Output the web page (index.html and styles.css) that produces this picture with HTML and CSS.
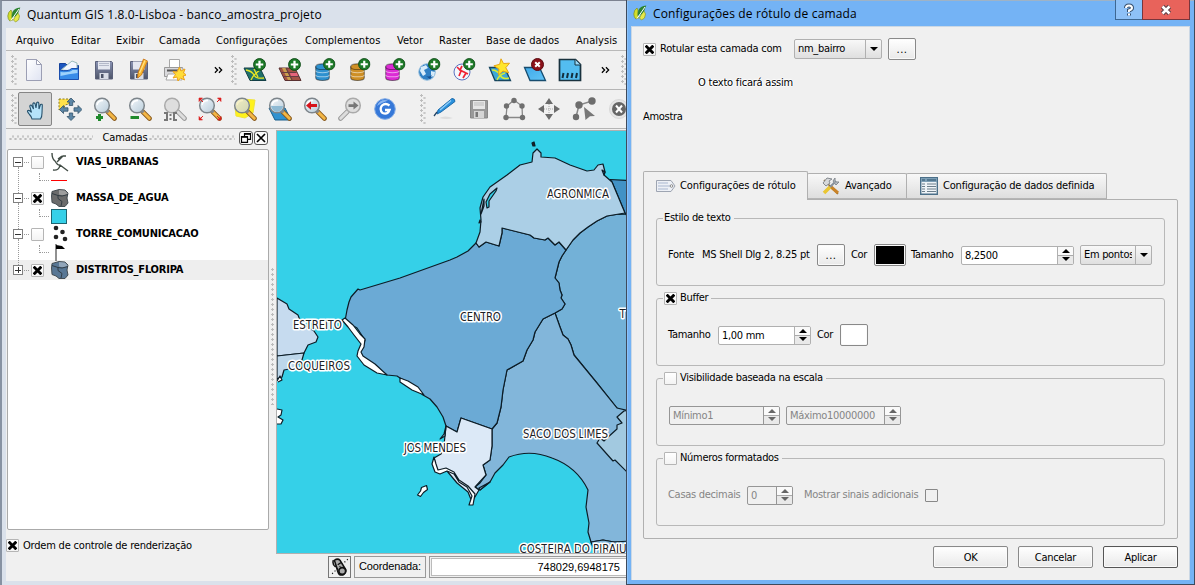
FILE: index.html
```html
<!DOCTYPE html>
<html lang="pt-BR">
<head>
<meta charset="utf-8">
<title>Quantum GIS</title>
<link rel="stylesheet" href="styles.css">
</head>
<body>
<svg class="defs" width="0" height="0">
  <defs>
    <linearGradient id="gBlue" x1="0" y1="0" x2="1" y2="1"><stop offset="0" stop-color="#3fa9e8"/><stop offset="1" stop-color="#62c4f6"/></linearGradient>
    <linearGradient id="gLens" x1="0" y1="0" x2="1" y2="1"><stop offset="0" stop-color="#f4f8fb"/><stop offset="1" stop-color="#b9cddb"/></linearGradient>
    <linearGradient id="gDisk" x1="0" y1="0" x2="0" y2="1"><stop offset="0" stop-color="#8a93b4"/><stop offset="1" stop-color="#4d5468"/></linearGradient>
    <linearGradient id="gPaper" x1="0" y1="0" x2="1" y2="1"><stop offset="0" stop-color="#fff"/><stop offset="1" stop-color="#dfe3f2"/></linearGradient>
    <symbol id="qgis" viewBox="0 0 14 16"><path d="M4 3Q1 5 .8 9q0 3 2 5l3-1Q4 9 5 5z" fill="#d3df2a" stroke="#7c8c22" stroke-width=".7"/><path d="M10.500 5l2 4-1 4-3 2-2-2z" fill="#e8e94a" stroke="#8c9926" stroke-width=".7"/><path d="M13.300.5Q7 .8 5.300 5.500L4.600 11Q10 9.500 11.500 5z" fill="#2e8432"/><path d="M12 2L4 13.500" stroke="#fff" stroke-width="1"/></symbol>
    <symbol id="plus" viewBox="0 0 14 14"><circle cx="7" cy="7" r="6.400" fill="#1d7a28" stroke="#0d4b16"/><path d="M7 3v8M3 7h8" stroke="#fff" stroke-width="2.400"/></symbol>
    <symbol id="lens" viewBox="0 0 24 24"><path d="M14.500 14.500l7 7" stroke="#8a5a1c" stroke-width="4.600" stroke-linecap="round"/><path d="M14.800 14.800l6.500 6.500" stroke="#f3b645" stroke-width="3" stroke-linecap="round"/><path d="M13.500 13.500l2 2" stroke="#888" stroke-width="3"/><circle cx="9" cy="8.500" r="7.300" fill="url(#gLens)" stroke="#7d858b" stroke-width="1.500"/><path d="M4 8Q5 3.500 10 3.500" stroke="#fff" stroke-width="1.300" fill="none"/></symbol>
    <symbol id="glens" viewBox="0 0 24 24"><path d="M14.500 14.500l7 7" stroke="#999" stroke-width="4.600" stroke-linecap="round"/><path d="M14.800 14.800l6.500 6.500" stroke="#ddd" stroke-width="3" stroke-linecap="round"/><circle cx="9" cy="8.500" r="7.300" fill="#dedede" stroke="#aaa" stroke-width="1.500"/></symbol>
    <symbol id="poly" viewBox="0 0 20 20"><path d="M2 3.500L9 1.500l6 .5 3 3-1 5 1 5-3 3.500H9L6 16l-4-1.500L1.500 8z" fill="currentColor" stroke="#3a4348" stroke-width=".9"/><path d="M9 2l6 .5 3 3.500-5 1.500-4-1z" fill="#fff" opacity=".35"/><path d="M2 5.500l6 2 4 .5 6-1.500M8 7.500l0 3 4 3-1 4.500" fill="none" stroke="#2b363d" stroke-width=".9"/></symbol>
    <symbol id="dbs" viewBox="0 0 14 17"><path d="M.6 3.500v10.500q0 2.500 6.400 2.500t6.400-2.500V3.500z" fill="currentColor" stroke="#0007"/><ellipse cx="7" cy="3.500" rx="6.400" ry="2.700" fill="currentColor" stroke="#0006"/><path d="M.6 7.200q0 2 6.400 2t6.400-2M.6 11q0 2 6.400 2t6.400-2" fill="none" stroke="#fff8"/></symbol>
    <symbol id="cross" viewBox="0 0 9 9"><path d="M1.700 1.700l5.600 5.600M7.300 1.700L1.700 7.300" stroke="#000" stroke-width="2.900" stroke-linecap="square"/></symbol>
    <symbol id="chevrons" viewBox="0 0 10 8"><path d="M1 1l3 3-3 3M5.500 1l3 3-3 3" fill="none" stroke="#000" stroke-width="1.400"/></symbol>
  </defs>
</svg>

<div class="desktop">
<section class="main-window">
  <header class="main-title"><svg class="logo"><use href="#qgis"/></svg><span>Quantum GIS 1.8.0-Lisboa - banco_amostra_projeto</span></header>
  <div class="client">
    <nav class="menu"><span>Arquivo</span><span>Editar</span><span>Exibir</span><span>Camada</span><span>Configurações</span><span>Complementos</span><span>Vetor</span><span>Raster</span><span>Base de dados</span><span>Analysis</span></nav>

    <div class="toolbar files">
      <i class="grip"></i>
      <div class="tool"><svg viewBox="0 0 24 24"><path d="M4.500 1.500h10l5 5v16h-15z" fill="url(#gPaper)" stroke="#9c9fb4"/><path d="M14.500 1.500v5h5z" fill="#fff" stroke="#9c9fb4"/></svg></div>
      <div class="tool"><svg viewBox="0 0 24 24"><path d="M2.500 8V5.500h6l2 2h11V21h-19z" fill="#1c57c0" stroke="#15429a"/><path d="M4 12L15 3l5 2v8z" fill="#f3f7ff" stroke="#9bb"/><path d="M2.500 12q9 2 12-1.500h7V21.500h-19z" fill="#388be8" stroke="#1b4fae"/><path d="M3.500 14q9 1 12-2h5v3q-9 1-17 3z" fill="#9fd2fb"/></svg></div>
      <div class="tool"><svg viewBox="0 0 24 24"><path d="M3.500 3.500h16l1 1v16.500h-17z" fill="url(#gDisk)" stroke="#5b617a"/><path d="M6 3.500h12v8H6z" fill="#e4e7f0"/><path d="M7 5.500h10M7 7.500h10" stroke="#b4b9c9"/><path d="M7.500 15h9v6h-9z" fill="#d9dde6"/><path d="M9 16h2.500v4H9z" fill="#4d5468"/></svg></div>
      <div class="tool"><svg viewBox="0 0 24 24"><path d="M3.500 3.500h16l1 1v16.500h-17z" fill="url(#gDisk)" stroke="#5b617a"/><path d="M6 3.500h12v8H6z" fill="#e4e7f0"/><path d="M7.500 15h9v6h-9z" fill="#d9dde6"/><path d="M9 16h2.500v4H9z" fill="#4d5468"/><path d="M16.500 1l4 2-6 14-4 3 .5-5z" fill="#f8b52d" stroke="#c46e14" stroke-width=".8"/><path d="M18 2.500l-5.500 12.500" stroke="#ffe38a" stroke-width="1.200"/></svg></div>
      <div class="tool"><svg viewBox="0 0 24 24"><path d="M7.500 1.500h10v9h-10z" fill="#fff" stroke="#a7a7a7"/><path d="M2.500 9.500h18l1 3v6h-19z" fill="#d9d9dc" stroke="#999"/><path d="M5 12.500h14" stroke="#555" stroke-width="2"/><path d="M6 16h12l2 6H4z" fill="#fff" stroke="#aaa"/><path d="M17.500 9l1.500 4 4-2-1.500 4 3 2-3.500 1 1.500 4-4-2-2.500 3-1-4-4 1 2.500-3.500-2.500-3 4 .5z" fill="#ffdc38" stroke="#eda21b"/></svg></div>
      <span class="more"><svg><use href="#chevrons"/></svg></span>
      <i class="grip"></i>
      <div class="tool"><svg viewBox="0 0 24 24"><path d="M1 10h16l6 12.500H7z" fill="#20716a" stroke="#123f46"/><path d="M3 12q6 1 8 5t10 3M8 22q2-5 9-10M11 11l4 8" fill="none" stroke="#e9e622" stroke-width="1.300"/><use href="#plus" x="10" y="0" width="13" height="13"/></svg></div>
      <div class="tool"><svg viewBox="0 0 24 24"><path d="M1 10h16l6 12.500H7z" fill="#a45345" stroke="#5a3030"/><path d="M4 10h4l6 12H10z" fill="#c9a04f"/><path d="M3 14.500h15M5 18.500h16M8 10l6 12" stroke="#683d43" stroke-width="1.200"/><path d="M12 15l7 0 1 3-7 0z" fill="#e5657b"/><use href="#plus" x="10" y="0" width="13" height="13"/></svg></div>
      <div class="tool db-blue"><svg viewBox="0 0 24 24"><use href="#dbs" x="2" y="5" width="15" height="18"/><use href="#plus" x="10" y="0" width="12.500" height="12.500"/></svg></div>
      <div class="tool db-gold"><svg viewBox="0 0 24 24"><use href="#dbs" x="2" y="5" width="15" height="18"/><use href="#plus" x="10" y="0" width="12.500" height="12.500"/></svg></div>
      <div class="tool db-pink"><svg viewBox="0 0 24 24"><use href="#dbs" x="2" y="5" width="15" height="18"/><use href="#plus" x="10" y="0" width="12.500" height="12.500"/></svg></div>
      <div class="tool"><svg viewBox="0 0 24 24"><circle cx="9" cy="14" r="8.300" fill="#2f7fc4" stroke="#9dc3df"/><path d="M3 9l5-2 2 3-4 2 2 4-3 2-3-5zM13 13l4 1-1 4-3 1z" fill="#d8ecfa"/><path d="M8 18q5 2 7-3l-3 6z" fill="#154f91"/><use href="#plus" x="10" y="0" width="12.500" height="12.500"/></svg></div>
      <div class="tool"><svg viewBox="0 0 24 24"><circle cx="9" cy="14" r="8" fill="#f5f7fc" stroke="#5a72c0"/><path d="M4 9l4 4-2 5M9 8l-2 4 6 3-3 5M11 14l4 2" fill="none" stroke="#ef2335" stroke-width="1.700"/><use href="#plus" x="10" y="0" width="12.500" height="12.500"/></svg></div>
      <div class="tool"><svg viewBox="0 0 24 24"><path d="M1.500 9.500h15l6 13H7z" fill="#3fa9d6" stroke="#16455f" stroke-width="1.300"/><path d="M4 12q5 0 8 5t9 3M9 22q2-5 8-7" fill="none" stroke="#d8ec32" stroke-width="1.500"/><path d="M13 .8l2.500 4.700 6-.3-3.700 4.500 3 5.300-5.800-2-4.500 4 .4-6-5-3.200 5.800-1.500z" fill="#ffe62a" stroke="#e6a515"/></svg></div>
      <div class="tool"><svg viewBox="0 0 24 24"><path d="M1.500 9.500h15l6 13H7z" fill="url(#gBlue)" stroke="#174c6e" stroke-width="1.300"/><circle cx="14.500" cy="6.500" r="6" fill="#8b1119" stroke="#5a0a10"/><path d="M12.200 4.200l4.600 4.600m0-4.600l-4.600 4.600" stroke="#fff" stroke-width="2"/></svg></div>
      <div class="tool"><svg viewBox="0 0 24 24"><path d="M1.500 1.500h16l5 5v16h-21z" fill="#53bdf0" stroke="#19323e" stroke-width="1.700"/><path d="M17 1.500v5.500h5.500" fill="#9bdcfb" stroke="#19323e"/><path d="M5.500 15l-1 5M10 15l-1 5M14.500 15l-1 5M19 15l-1 5" stroke="#142f3d" stroke-width="2"/></svg></div>
      <span class="more last"><svg><use href="#chevrons"/></svg></span>
      <i class="grip"></i>
    </div>

    <div class="toolbar navigation">
      <i class="grip"></i>
      <div class="tool pressed"><svg viewBox="0 0 24 24"><path d="M9 22q-.5-2.500-2.500-4.500Q3.500 14 5 13.500q1.500-.5 3.500 2L6.800 9.500q0-1.800 1.700-1.300L10.500 12l-.7-5Q10.500 5 12 6.500L13 11l.8-5.500q1.700-1 2 .8L16 12l1.500-4.500q1.800-.8 1.800 1L19 16q0 4-1.500 6z" fill="#b5e2f9" stroke="#26516c" stroke-width="1.100"/></svg></div>
      <div class="tool"><svg viewBox="0 0 24 24"><path d="M1 2h11l-1 5-4 1-1 3-5 2z" fill="#ffe14a" stroke="#8b7a1f" stroke-dasharray="2 1.500"/><path d="M13 1l4 4h-2.300v3.500h-3.400V5H9zM13 23.500l-4-4h2.300V16h3.400v3.500H17zM1.500 12.500l4-4v2.300H10v3.400H5.500v2.300zM24 12.500l-4-4v2.300h-4v3.400h4v2.300z" fill="#5c86a6" stroke="#35546b" stroke-width=".8"/></svg></div>
      <div class="tool"><svg viewBox="0 0 24 24"><use href="#lens"/><path d="M6.500 17v7M3 20.500h7" stroke="#1f8a2c" stroke-width="3"/></svg></div>
      <div class="tool"><svg viewBox="0 0 24 24"><use href="#lens"/><path d="M2.500 20.500h8.500" stroke="#1f8a2c" stroke-width="3"/></svg></div>
      <div class="tool"><svg viewBox="0 0 24 24"><use href="#glens"/><path d="M1 16h3v7H1M7.500 17v2m0 2v2M14 16h-3v7h3" fill="none" stroke="#777" stroke-width="2"/></svg></div>
      <div class="tool"><svg viewBox="0 0 24 24"><use href="#lens"/><path d="M1 1h3.500L1 4.500zM23 1h-3.500l3.500 3.500zM1 23h3.500l-3.500-3.500zM23 23h-3.500l3.500-3.500z" fill="#dc2020" stroke="#dc2020" stroke-width=".6"/><path d="M2 2l3 3m17-3l-3 3M2 22l3-3m17 3l-3-3" stroke="#dc2020"/></svg></div>
      <div class="tool"><svg viewBox="0 0 24 24"><path d="M9 2l13 1-2 13-8 5-9-2-1-9z" fill="#fff21c" stroke="#f0e43b"/><use href="#lens"/><circle cx="9" cy="8.500" r="6.400" fill="#eddf80" opacity=".45"/></svg></div>
      <div class="tool"><svg viewBox="0 0 24 24"><path d="M1 11h16l6 12H7z" fill="#3192d0" stroke="#195c89"/><use href="#lens"/><path d="M3 9h12q-1 5-6 6-5-1-6-6z" fill="#8ebad4"/></svg></div>
      <div class="tool"><svg viewBox="0 0 24 24"><use href="#lens"/><path d="M3 8.500l5-4.200v2.700h6v3H8v2.700z" fill="#d7141c"/></svg></div>
      <div class="tool"><svg viewBox="0 0 24 24"><g transform="matrix(-1 0 0 1 24 0)"><use href="#glens"/></g><path d="M20.500 8.500l-5-4v2.700h-5v2.700h5v2.700z" fill="#777"/></svg></div>
      <div class="tool"><svg viewBox="0 0 24 24"><circle cx="12" cy="12" r="10.300" fill="#3678d8" stroke="#7fa9e5"/><path d="M4 9Q7 1.500 15 3.500 10 5 4 9z" fill="#8ab5f1"/><path d="M16.500 8.500q-4-3-7.500 0-3 4 .5 7.500 5 2 7-3H12" fill="none" stroke="#fff" stroke-width="2.300"/></svg></div>
      <i class="grip far"></i>
      <div class="tool"><svg viewBox="0 0 24 24"><path d="M7 21q6-3 14 0-6 2-14 0" fill="#ddd"/><path d="M20 1.500q3 0 3 3L9 15l-4 2 1-4z" fill="#2a91dc" stroke="#1c6aab"/><path d="M19 3.500L8 13" stroke="#91cef9" stroke-width="1.300"/><path d="M5 15l-3 4" stroke="#246" stroke-width="1.300"/></svg></div>
      <div class="tool"><svg viewBox="0 0 24 24"><path d="M3.500 3.500h17v17.500h-17z" fill="#999" stroke="#888"/><path d="M6 4h12v8H6z" fill="#e6e6e6"/><path d="M7 6h10M7 8h10" stroke="#bbb"/><path d="M7 14h10v7H7z" fill="#d5d5d5"/><path d="M8.500 15H11v5H8.500z" fill="#777"/></svg></div>
      <div class="tool"><svg viewBox="0 0 24 24"><path d="M4 20.500L5 9l7-6 8 6 .5 11.500z" fill="none" stroke="#888" stroke-width="1.300"/><g fill="#6f6f6f"><circle cx="12" cy="3.500" r="2.700"/><circle cx="4.500" cy="9" r="2.700"/><circle cx="20" cy="9" r="2.700"/><circle cx="4" cy="20.500" r="2.700"/><circle cx="20.500" cy="20.500" r="2.700"/></g></svg></div>
      <div class="tool"><svg viewBox="0 0 24 24"><path d="M12 1l4 6H8zM12 23l4-6H8zM1 12l6-4v8zM23 12l-6-4v8z" fill="#6b6b6b"/><path d="M12 7v10M7 12h10" stroke="#aaa" stroke-dasharray="1 1"/></svg></div>
      <div class="tool"><svg viewBox="0 0 24 24"><path d="M4 20L7 8l13-4" fill="none" stroke="#888" stroke-width="1.500"/><g fill="#6d6d6d"><circle cx="20" cy="4" r="3.700"/><circle cx="7" cy="8" r="3.700"/><circle cx="4" cy="20" r="3.200"/></g><path d="M12 10l11 9-5 .3L13.500 23z" fill="#777"/></svg></div>
      <div class="tool"><svg viewBox="0 0 24 24"><circle cx="12" cy="12" r="9.500" fill="#e5e5e5" stroke="#d8d8d8"/><circle cx="12" cy="12" r="7" fill="#666"/><path d="M9 8.500l6 7m0-7l-6 7" stroke="#fff" stroke-width="2"/></svg></div>
    </div>

    <div class="workspace">
      <aside class="dock">
        <div class="dock-head"><i class="dots"></i><span>Camadas</span><i class="dots right"></i>
          <b class="mini"><svg viewBox="0 0 12 12"><path d="M4.500 4V1.700h6v5.600H8M1.500 4.700h6v5.600h-6z" fill="none" stroke="#000" stroke-width="1.200"/><path d="M4 2h7M1 5h7" stroke="#000" stroke-width="1.600"/></svg></b>
          <b class="mini"><svg viewBox="0 0 12 12"><path d="M2 2l8 8m0-8l-8 8" stroke="#000" stroke-width="1.700"/></svg></b></div>
        <div class="tree">
          <div class="layer"><i class="expander"></i><i class="check"></i><svg viewBox="0 0 20 20"><path d="M2 1q0 6 3 8 3 5 5 4l8 6M7 10l6-6h3M12 4L8 7M3 18q6 1 7-5" fill="none" stroke="#414c45" stroke-width="1.400"/></svg><span>VIAS_URBANAS</span></div>
          <div class="symbol"><i class="branch"></i><i class="line"></i></div>
          <div class="layer"><i class="expander"></i><i class="check"><svg><use href="#cross"/></svg></i><svg class="gray" viewBox="0 0 20 20"><use href="#poly"/></svg><span>MASSA_DE_AGUA</span></div>
          <div class="symbol"><i class="branch"></i><i class="water"></i></div>
          <div class="layer"><i class="expander"></i><i class="check"></i><svg viewBox="0 0 20 20"><g fill="#222"><circle cx="6" cy="4" r="2.300"/><circle cx="12.500" cy="8" r="2.300"/><circle cx="6" cy="13" r="2.300"/><circle cx="15" cy="15" r="2.300"/></g></svg><span>TORRE_COMUNICACAO</span></div>
          <div class="symbol"><i class="branch"></i><svg viewBox="0 0 17 17"><path d="M5 0v17" stroke="#222"/><path d="M5 1l6 1 3 3H5z" fill="#000"/></svg></div>
          <div class="layer selected"><i class="expander plus"></i><i class="check"><svg><use href="#cross"/></svg></i><svg class="slate" viewBox="0 0 20 20"><use href="#poly"/></svg><span>DISTRITOS_FLORIPA</span></div>
        </div>
        <div class="render-order"><i class="check"><svg><use href="#cross"/></svg></i><span>Ordem de controle de renderização</span></div>
      </aside>
      <div class="splitter"><i></i></div>
      <div class="map-side">
        <svg class="map" viewBox="277 131 349 422">
          <rect x="277" y="131" width="349" height="422" fill="#35d0e8"/>
          <g stroke="#0c1c26" stroke-width="1.200" stroke-linejoin="round">
            <path d="M566 250L573 240 580 233 588 227 597 221 607 216 616 214.500 630 214V415L617 408 597 383 574 355 571 345 568 339 563 335 560 327 555 313 562 309 565 304 561 298 562 295 560 290 559 283 555 278 559 262 562 256z" fill="#73b1d7"/>
            <path d="M610 179.500L630 180.500V220L625 213 612 182z" fill="#4292c6"/>
            <path d="M555 313L560 327 563 335 568 339 571 345 574 355 597 383 617 408 630 411 630 542 614 542 603 540 591 542 588 532 589 523 586 507 588 490Q577 467 552 458 530 449 509 457L503 465 495 473 490 482 480 490 475 487 480 483 486 475 483 465 490 460 492 446 492 429 497 423 501 407 503 390 507 370 523 361 527 350 533 340 535 332 543 319z" fill="#82b6da"/>
            <path d="M591 542L603 540 614 542 630 541V560H598z" fill="#82b6da"/>
            <path d="M630 410L624 411 617 417 622 423 617 425 617 429 607 438 604 441 600 438 597 443 613 461 615 460 630 475z" fill="#a2c9e0"/>
            <path d="M476 243L479 247 486 242 499 246 502 233 502 228 530 235 534 238 545 240 548 238 555 245 559 242 566 250 562 256 559 262 555 278 559 283 560 290 562 295 561 298 565 304 562 309 555 313 543 319 535 332 533 340 527 350 523 361 507 370 503 390 501 407 497 423 492 429 461 418 457 432 446 426 443 417 437 407 430 399 423 395 413 385 400 378 397 376 387 375 377 368 363 362 358 355 364 343 365 340 357 328 345 321 347 310 349 302 351 297 358 289 360 290 400 278 450 260 457 257 468 251z" fill="#6baad5"/>
            <path d="M476 243L480 232 481 220 480 208 483 197 490 187 507 175 520 165 532 162 533 153 537 149 541 153 541 157 555 158 570 165 587 171 594 170 598 165 603 164 605 172 604 175 612 182 625 213 616 214.500 607 216 597 221 588 227 580 233 573 240 566 250 559 242 555 245 548 238 545 240 534 238 530 235 502 228 502 233 499 246 486 242 479 247z" fill="#abcfe6"/>
            <path d="M461 418L492 429 492 446 490 460 483 465 486 475 475 487 479 490 472 502 468 492 457 483 447 471 437 471 434 458 441 454 444 445 446 426 457 432z" fill="#dce9f7"/>
            <path d="M277 298L287 304 289 309 298 315 301 323 314 331 318 337 316 342 308 345 304 353 277 356z" fill="#c6dbef"/>
            <path d="M277 356L304 353 302 360 295 368 284 370 282 377 277 379z" fill="#bdd7eb"/>
            <path d="M342 320L345 318 353 325 360 334 365 339 364 347 361 352 363 356 375 364 387 375 377 373 364 365 357 356 358 351 361 344 354 335 348 327z" fill="#fff"/>
            <path d="M400 378L408 381 418 387 424 395 412 390 400 382z" fill="#fff"/>
            <path d="M434 457L432 464 435 472 440 474 447 471 454 474 459 482 467 487 472 496 469 505 473 505 475 494 468 486 459 480 454 472 446 468 438 470 436 464z" fill="#fff"/>
            <path d="M446 426L444 434 440 439 445 436z" fill="#9fc6dd"/>
            <path d="M417.500 495l3-4 1-3.500 5-2 1 4-4 3-3 4z" fill="#fff"/>
            <path d="M532 143l2-1 1 4-2 0z" fill="#222"/>
            <path d="M497 188l-7 6-4 8 1 6 2-1 0-6 7-10z" fill="#35d0e8"/>
            <path d="M484 199l-3 15 3-8zM480 220l-1 3 2-1z" fill="#b6b4ac"/>
            <path d="M277 409l5 1-1 5-3 2 5 3-2 4-4 0" fill="#fff"/>
            <path d="M277 381l3-5 2 4-4 2" fill="#fff"/>
            <path d="M602 170l3 2-1 3z" fill="#287eb5"/>
            <path d="M490 482l-10 8-1-2z" fill="#72b1d8"/>
          </g>
          <g class="map-labels">
            <text x="547" y="198.300" textLength="62" lengthAdjust="spacing">AGRONMICA</text>
            <text x="460" y="321" textLength="41">CENTRO</text>
            <text x="293" y="329.300" textLength="49">ESTREITO</text>
            <text x="288" y="369.500" textLength="62">COQUEIROS</text>
            <text x="404" y="452.300" textLength="62">JOS MENDES</text>
            <text x="523" y="438.300" textLength="85">SACO DOS LIMES</text>
            <text x="519.500" y="552.500" textLength="107">COSTEIRA DO PIRAJU</text>
            <text x="619.500" y="318.300">T</text>
          </g>
        </svg>
        <div class="status">
          <b class="extent"><svg viewBox="0 0 16 16"><path d="M3 2q3-2 5 0l5 8q1 3-2 5-4 1-5-3zM3 2l3 9M6 6l3-2M2 2Q1 6 4 8" fill="#aaa" stroke="#111" stroke-width="1.300"/><circle cx="10" cy="11.500" r="3" fill="#aaa" stroke="#111" stroke-width="1.500"/><path d="M1 14L15 1" stroke="#111" stroke-dasharray="1 2"/></svg></b>
          <span class="coord-label">Coordenada:</span>
          <span class="coord"><span>748029,6948175</span></span>
        </div>
      </div>
    </div>
  </div>
</section>

<section class="dialog">
  <header class="dialog-title"><svg class="logo"><use href="#qgis"/></svg><span>Configurações de rótulo de camada</span>
    <b class="help"><svg viewBox="0 0 12 14"><path d="M3 5Q3 2.500 6 2.500t3 2.500Q9 6.500 6 7.500V9M6 10.500v2" fill="none" stroke="#36506e" stroke-width="4"/><path d="M3 5Q3 2.500 6 2.500t3 2.500Q9 6.500 6 7.500V9M6 10.500v2" fill="none" stroke="#fff" stroke-width="2"/></svg></b>
    <b class="close"><svg viewBox="0 0 12 12"><path d="M2.500 2.500l7 7m0-7l-7 7" stroke="#5f4148" stroke-width="4.600"/><path d="M2.500 2.500l7 7m0-7l-7 7" stroke="#fff" stroke-width="2.500"/></svg></b></header>
  <div class="dialog-body">
    <div class="label-with"><i class="check"><svg><use href="#cross"/></svg></i><span class="w-with">Rotular esta camada com</span><span class="combo field-name"><span>nm_bairro</span><i></i></span><b class="btn dots-btn">...</b></div>
    <div class="sample-title"><span>O texto ficará assim</span></div>
    <div class="sample">Amostra</div>
    <div class="tabs">
      <div class="tab active"><svg class="tag" viewBox="0 0 20 14"><path d="M.5 1.500h14.500l4 5.500-4 5.500H.5z" fill="#edf0f6" stroke="#9ea5b2"/><path d="M2 4h10M2 7h12M2 10h10" stroke="#a9b7d0"/><circle cx="15.500" cy="7" r="1.300" fill="#fff" stroke="#888"/></svg><span>Configurações de rótulo</span></div>
      <div class="tab second"><svg viewBox="0 0 18 18"><path d="M2 3l3 3 11 11" stroke="#8c6a34" stroke-width="1.500"/><path d="M8 9l8 7" stroke="#c98328" stroke-width="3"/><path d="M3 15L14 4" stroke="#87919b" stroke-width="2"/><path d="M2 16l6-6" stroke="#eac632" stroke-width="3.600"/><path d="M1 6l4-5 5 1-3 2 1 2-4 3z" fill="#d7d9db" stroke="#858a90"/><path d="M13 1v4l4 0-3 3-3-4z" fill="#bbc3ca" stroke="#858a90"/></svg><span>Avançado</span></div>
      <div class="tab third"><svg viewBox="0 0 18 18"><path d="M.7.700h16.600v16.600H.7z" fill="#eef3f7" stroke="#4b6f89" stroke-width="1.400"/><path d="M1 3h16" stroke="#7d9fb6" stroke-width="4"/><path d="M2 3h3M7 3h9" stroke="#2d526d" stroke-width="1.200"/><path d="M2 7h3m2 0h9M2 9.500h3m2 0h9M2 12h3m2 0h9M2 14.500h3m2 0h9" stroke="#6c7e8b"/></svg><span>Configuração de dados definida</span></div>
    </div>
    <div class="pane">
      <fieldset><legend>Estilo de texto</legend>
        <div class="row"><span class="w-font">Fonte</span><span class="w-name">MS Shell Dlg 2, 8.25 pt</span><b class="btn dots-btn">...</b><span class="w-cor">Cor</span><b class="btn swatch black"><i></i></b><span class="w-size">Tamanho</span><span class="spin size-value"><span>8,2500</span><i></i></span><span class="combo units"><span>Em pontos</span><i></i></span></div>
      </fieldset>
      <fieldset><legend><i class="check"><svg><use href="#cross"/></svg></i>Buffer</legend>
        <div class="row"><span class="w-tam">Tamanho</span><span class="spin buffer-value"><span>1,00 mm</span><i></i></span><span class="w-cor2">Cor</span><b class="btn swatch white"></b></div>
      </fieldset>
      <fieldset><legend><i class="check"></i>Visibilidade baseada na escala</legend>
        <div class="row disabled"><span class="spin min"><span>Mínimo1</span><i></i></span><span class="spin max"><span>Máximo10000000</span><i></i></span></div>
      </fieldset>
      <fieldset><legend><i class="check"></i>Números formatados</legend>
        <div class="row disabled"><span class="w-casas">Casas decimais</span><span class="spin decimals"><span>0</span><i></i></span><span class="w-sinais">Mostrar sinais adicionais</span><i class="check off"></i></div>
      </fieldset>
    </div>
    <footer><b class="btn">OK</b><b class="btn">Cancelar</b><b class="btn default">Aplicar</b></footer>
  </div>
</section>
</div>
</body>
</html>
```
FILE: styles.css
```css
* { box-sizing: border-box; }
body { margin: 0; overflow: hidden; color: #000; font: 11px/14px "DejaVu Sans Condensed", "DejaVu Sans", sans-serif; letter-spacing: -0.3px; white-space: nowrap; }
b { font-weight: normal; }
i { font-style: normal; }
svg { display: block; flex: none; }
.defs { position: absolute; }
.desktop { position: relative; width: 1195px; height: 585px; overflow: hidden; background: #dae2ec; }

/* Main window */
.main-window { position: absolute; left: 0; top: 0; width: 627px; height: 585px; border-top: 1px solid #7c8290; border-left: 2px solid #8792a2; background: #dae1eb; padding-left: 4px; }
.main-title { height: 27px; display: flex; align-items: center; font: 12px/16px "Open Sans", "Noto Sans", sans-serif; letter-spacing: 0.150px; }
.logo { width: 14px; height: 16px; margin: 0 6px 0 1px; }
.client { height: 553px; background: #f0f0f0; display: flex; flex-direction: column; }
.menu { height: 23px; padding: 6px 0 0 10px; display: grid; grid-template-columns: 55px 45px 43px 57px 89px 92px 42px 47px 90px 50px; border-bottom: 1px solid #b9b9b9; letter-spacing: 0.050px; }
.toolbar { height: 39px; display: flex; align-items: center; border-bottom: 1px solid #b5b5b5; overflow: hidden; }
.grip { width: 6px; height: 30px; margin: 0 0 0 5px; flex: none; background-image: radial-gradient(circle at 1.500px 1.500px, #bcbcbc 1px, transparent 1.300px), radial-gradient(circle at 4.500px 4px, #c8c8c8 1px, transparent 1.300px); background-size: 6px 5px; }
.tool { width: 35px; height: 34px; flex: none; display: flex; align-items: center; justify-content: center; }
.tool svg { width: 24px; height: 24px; }
.files > .grip:first-child + .tool { margin-left: -1px; }
.pressed { margin-left: 1px; width: 34px; border: 1px solid #858585; border-radius: 2px; background: #d4d4d4; }
.db-blue { color: #2e91cf; }
.db-gold { color: #ce8f25; }
.db-pink { color: #dc2bd5; }
.more { width: 38px; padding-left: 23px; flex: none; }
.more svg { width: 9px; height: 8px; }
.more.last { padding-left: 14px; width: 32px; }
.files .more + .grip { margin-left: 2px; }
.grip.far { margin-left: 18px; }

.workspace { flex: 1; display: flex; min-height: 0; }
.dock { width: 263px; padding-left: 1px; }
.dock-head { height: 20px; padding: 0 1px 2px 2px; display: flex; align-items: center; gap: 1px; }
.dock-head > span { width: 55px; padding-left: 9px; letter-spacing: -0.200px; }
.dots { width: 84px; height: 6px; background-image: radial-gradient(circle at 1.500px 4px, #bcbcbc 1px, transparent 1.300px), radial-gradient(circle at 4px 1.500px, #c8c8c8 1px, transparent 1.300px); background-size: 5px 6px; }
.dots.right { width: 86px; margin-right: 3px; }
.mini { width: 14px; height: 14px; border: 1px solid #555; border-radius: 3px; background: #fafafa; }
.mini svg { width: 12px; height: 12px; }
.tree { height: 381px; border: 1px solid #aaa; border-radius: 2px; background: #fff; padding-top: 2px; }
.layer { height: 20px; display: flex; align-items: center; padding-left: 5px; font-weight: bold; }
.layer > svg { width: 20px; height: 20px; margin-left: 6px; }
.layer > span { margin-left: 6px; letter-spacing: -0.200px; }
.symbol { height: 16px; display: flex; align-items: center; padding-left: 31px; }
.selected { background: #eee; }
.expander { position: relative; width: 10px; height: 10px; margin-right: 8px; border: 1px solid #808080; background: linear-gradient(#333, #333) center / 6px 1px no-repeat #fff; }
.expander::before { content: ""; position: absolute; left: 10px; top: 4px; width: 5px; border-top: 1px dotted #999; }
.expander::after { content: ""; position: absolute; left: 4px; top: 9px; height: 26px; border-left: 1px dotted #999; }
.expander.plus { background: linear-gradient(#333, #333) center / 6px 1px no-repeat, linear-gradient(#333, #333) center / 1px 6px no-repeat #fff; }
.expander.plus::after { display: none; }
.branch { width: 10px; height: 8px; margin: -6px 2px 0 0; border-left: 1px dotted #999; border-bottom: 1px dotted #999; }
.line { width: 16px; height: 1px; background: #f00; }
.water { width: 16px; height: 15px; border: 1px solid #1d6571; background: #35d0e8; }
.symbol svg { width: 17px; height: 17px; }
.gray { color: #6b6b6b; }
.slate { color: #587795; }
.check { width: 13px; height: 13px; flex: none; border: 1px solid #b5b5b5; border-radius: 1px; background: linear-gradient(#fff, #f3f3f3); padding: 1px; display: inline-block; }
.check svg { width: 9px; height: 9px; }
.render-order { height: 31px; display: flex; align-items: center; gap: 4px; margin-left: -1px; letter-spacing: -0.200px; }
.splitter { width: 7px; padding: 138px 0 0 2px; }
.splitter i { display: block; width: 3px; height: 138px; background: radial-gradient(circle, #bcbcbc 1px, transparent 1.300px); background-size: 3px 5px; }
.map-side { width: 351px; }
.map { width: 350px; height: 424px; margin-top: 1px; border: 1px solid #b0b0b0; border-right: 0; }
.map-labels { font-size: 11.500px; letter-spacing: 0; fill: #1c2024; stroke: #fff; stroke-width: 3px; stroke-linejoin: round; paint-order: stroke; }
.status { height: 27px; padding: 0 0 1px 52px; display: flex; align-items: center; gap: 3px; }
.extent { width: 23px; height: 22px; border: 1px solid #777; padding: 1px; flex: none; }
.extent svg { width: 18px; height: 18px; margin-left: 1px; }
.coord-label { width: 72px; flex: none; height: 22px; border: 1px solid #999; padding: 2px 0 0 4px; font: 11px/15px "Liberation Sans", Arial, sans-serif; letter-spacing: -0.150px; }
.coord { width: 200px; flex: none; height: 22px; border: 1px solid #999; padding: 1px; font: 11px/16px "Liberation Sans", Arial, sans-serif; letter-spacing: 0; }
.coord span { display: block; height: 18px; border: 1px solid #bbb; background: #fff; text-align: right; padding-right: 6px; }

/* Label dialog */
.dialog { position: absolute; left: 626px; top: 0; width: 569px; height: 585px; border: solid #3e4a5c; border-width: 0 1px 1px 1px; background: #74b3f5; padding: 0 4px 4px; box-shadow: inset 0 1px #9fb3c6, inset 1px 0 #8cc2f8; }
.dialog-title { height: 26px; padding-left: 1px; display: flex; align-items: center; font: 12px/16px "Open Sans", "Noto Sans", sans-serif; letter-spacing: 0.150px; }
.dialog-title > span { padding-top: 2px; }
.help, .close { height: 20px; align-self: flex-start; display: flex; align-items: center; justify-content: center; }
.help { width: 28px; margin-left: auto; background: #8ec1f7; border: 1px solid #3d6792; border-top: 0; }
.help svg { width: 12px; height: 14px; }
.close { width: 48px; margin-left: -1px; background: #e8635b; border: 1px solid #79353c; border-top: 0; }
.close svg { width: 12px; height: 12px; }
.dialog-body { height: 554px; padding: 11px 11px 0 11px; background: #f0f0f0; border: 1px solid #cbd8e5; border-bottom: 0; }
.label-with { height: 22px; display: flex; align-items: center; }
.w-with { width: 138px; padding-left: 4px; letter-spacing: -0.220px; }
.btn { width: 75px; height: 22px; border: 1px solid #898989; border-radius: 2px; background: linear-gradient(#fff, #e9e9e9); text-align: center; line-height: 21px; flex: none; box-shadow: inset 0 0 0 1px #fafafa; }
.dots-btn { width: 28px; letter-spacing: 0.500px; }
.combo, .spin { height: 19px; display: flex; border: 1px solid #b0b0b0; border-radius: 2px; background: #fff; overflow: hidden; flex: none; }
.combo { height: 20px; background: linear-gradient(#f8f8f8, #dfdfdf); }
.combo > span, .spin > span { flex: 1; padding-left: 3px; line-height: 18px; overflow: hidden; min-width: 0; }
.combo > i { width: 16px; border-left: 1px solid #b0b0b0; display: flex; align-items: center; justify-content: center; }
.combo > i::after { content: ""; border: 4px solid transparent; border-top-color: #000; border-bottom: 0; }
.spin > i { width: 16px; border-left: 1px solid #b0b0b0; display: flex; flex-direction: column; justify-content: space-around; align-items: center; background: linear-gradient(#fafafa 0 45%, #aaa 46% 53%, #e9e9e9 54%); }
.spin > i::before { content: ""; border: 4px solid transparent; border-bottom-color: #000; border-top: 0; }
.spin > i::after { content: ""; border: 4px solid transparent; border-top-color: #000; border-bottom: 0; }
.field-name { width: 88px; margin-right: 6px; }
.sample-title { height: 47px; padding: 16px 0 0 55px; text-shadow: 1px 0 1px #fff, -1px 0 1px #fff, 0 1px 1px #fff, 0 -1px 1px #fff; letter-spacing: -0.220px; }
.sample { height: 64px; padding-top: 3px; }
.tabs { height: 28px; display: flex; align-items: flex-end; }
.tab { height: 26px; display: flex; align-items: center; border: 1px solid #b0b0b0; border-bottom-color: #b5b5b5; background: linear-gradient(#f8f8f8, #dedede); border-radius: 2px 2px 0 0; position: relative; margin-left: -1px; }
.tab.active { width: 165px; height: 29px; margin: 0 0 -1px; padding-left: 12px; background: #f0f0f0; border-bottom: 0; z-index: 1; letter-spacing: -0.120px; }
.tag { width: 20px; height: 14px; margin-right: 4px; }
.second { width: 100px; padding-left: 14px; letter-spacing: -0.200px; }
.second svg, .third svg { width: 18px; height: 18px; margin-right: 5px; }
.third { width: 201px; padding-left: 13px; letter-spacing: -0.200px; }
.pane { height: 340px; border: 1px solid #b0b0b0; border-radius: 0 2px 2px 2px; padding: 11px 12px 0 12px; display: flex; flex-direction: column; gap: 5px; }
fieldset { margin: 0; padding: 0 0 0 11px; height: 75px; min-width: 0; border: 1px solid #b8b8b8; border-radius: 3px; }
legend { height: 14px; margin-left: -5px; padding: 0 3px 0 1px; display: flex; gap: 3px; align-items: center; line-height: 16px; }
.row { height: 60px; display: flex; align-items: center; }
.w-font { width: 34px; }
.w-name { width: 115px; letter-spacing: -0.230px; }
.w-cor { width: 29px; padding-left: 6px; }
.swatch { width: 32px; padding: 1px; }
.swatch i { display: block; height: 18px; background: #000; }
.white { width: 28px; background: #fff; }
.w-size { width: 55px; padding-left: 5px; }
.size-value { width: 113px; margin-right: 6px; }
.units { width: 72px; }
.units > span { margin-right: 3px; }
.w-tam { width: 50px; }
.buffer-value { width: 93px; }
.w-cor2 { width: 29px; padding-left: 6px; }
.disabled { color: #858585; }
.disabled .spin { background: #f0f0f0; border-color: #969696; }
.disabled .spin > i { border-color: #969696; }
.disabled .spin > i::before { border-bottom-color: #666; }
.disabled .spin > i::after { border-top-color: #666; }
.min { width: 111px; margin: 0 6px 0 1px; }
.max { width: 115px; }
.w-casas { width: 79px; }
.decimals { width: 46px; }
.w-sinais { width: 132px; padding-left: 11px; }
.off { background: #f0f0f0; border-color: #888; }
footer { height: 36px; padding: 7px 0 0; display: flex; justify-content: flex-end; gap: 10px; }
.default { border-color: #555; }
```
